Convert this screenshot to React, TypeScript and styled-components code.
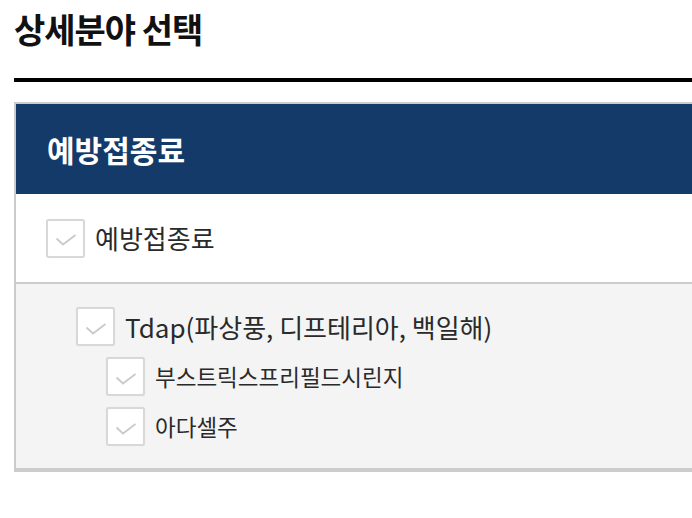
import styled, { createGlobalStyle } from "styled-components";

const GlobalStyle = createGlobalStyle`
  body {
    margin: 0;
    background: #ffffff;
    overflow: hidden;
    font-family: "Noto Sans CJK KR", "Noto Sans", sans-serif;
    color: #222222;
  }
`;

interface CheckProps {
  label: string;
  level: number;
  size: number;
}

const CheckRow = ({ label, level, size }: CheckProps) => {
  return (
    <StyledRow level={level}>
      <Box>
        <Tick width="22" height="12" viewBox="0 0 22 12">
          <path d="M1.5 4.5 L8 10.5 L20.5 1" fill="none" stroke="#cacaca" strokeWidth="1.8" />
        </Tick>
      </Box>
      <Label size={size}>{label}</Label>
    </StyledRow>
  );
};

const App = () => {
  return (
    <Page>
      <GlobalStyle />
      <Title>상세분야 선택</Title>
      <Rule />
      <Panel>
        <Header>예방접종료</Header>
        <TopRow>
          <CheckRow label="예방접종료" level={0} size={26} />
        </TopRow>
        <SubArea>
          <CheckRow label="Tdap(파상풍, 디프테리아, 백일해)" level={1} size={26} />
          <CheckRow label="부스트릭스프리필드시린지" level={2} size={22.5} />
          <CheckRow label="아다셀주" level={2} size={22.5} />
        </SubArea>
      </Panel>
    </Page>
  );
};

const Page = styled.div`
  width: 720px;
  padding: 0 0 0 14px;
`;

const Title = styled.h1`
  margin: 0;
  padding-top: 6px;
  height: 72px;
  font-size: 34px;
  font-weight: 700;
  letter-spacing: -1px;
  color: #111111;
  line-height: 46px;
`;

const Rule = styled.div`
  height: 4px;
  background: #000000;
`;

const Panel = styled.section`
  margin-top: 20px;
  border: 2px solid #cccccc;
  border-right: none;
  border-bottom: 4px solid #cccccc;
`;

const Header = styled.h2`
  margin: 0;
  height: 90px;
  display: flex;
  align-items: center;
  padding-left: 31px;
  background: #143a6a;
  color: #ffffff;
  font-size: 30px;
  font-weight: 700;
`;

const TopRow = styled.div`
  height: 88px;
  display: flex;
  align-items: center;
  background: #ffffff;
  border-bottom: 2px solid #cccccc;
`;

const SubArea = styled.div`
  background: #f4f4f4;
  padding: 23px 0 22px;
  display: flex;
  flex-direction: column;
  gap: 11px;
`;

const StyledRow = styled.div<{ level: number }>`
  display: flex;
  align-items: center;
  gap: 10px;
  padding-left: ${(p) => 30 + p.level * 30}px;
`;

const Box = styled.span`
  width: 39px;
  height: 39px;
  box-sizing: border-box;
  border: 2px solid #d8d8d8;
  border-radius: 3px;
  background: #ffffff;
  display: flex;
  align-items: center;
  justify-content: center;
  box-shadow: 0 0 1px rgba(0, 0, 0, 0.1);
`;

const Tick = styled.svg`
  margin-top: 4px;
`;

const Label = styled.span<{ size: number }>`
  font-size: ${(p) => p.size}px;
  color: #2a2a2a;
  line-height: 1;
`;

export default App;
